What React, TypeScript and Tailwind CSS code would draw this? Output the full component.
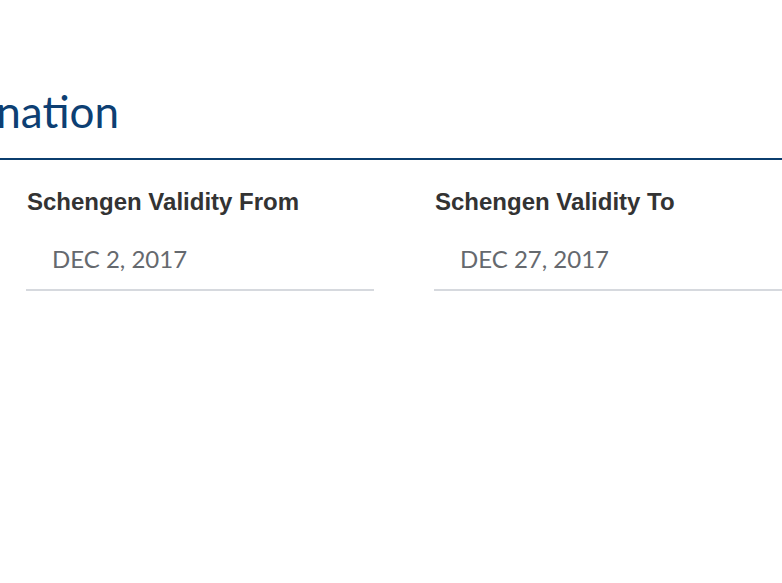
import React from "react";

function Field({ label, value }: { label: string; value: string }) {
  return (
    <div className="w-[348px] shrink-0">
      <div className="pl-[1px] text-[24px] leading-[28px] font-bold text-[#333333] font-['Liberation_Sans',Arial,sans-serif]">
        {label}
      </div>
      <div className="mt-[27px] pl-[26px] pb-[14px] border-b-2 border-[#d6d9de] text-[24px] leading-[32px] text-[#65696e] font-['Lato',sans-serif]">
        {value}
      </div>
    </div>
  );
}

export default function App() {
  return (
    <div className="w-[782px] h-[583px] overflow-hidden bg-white">
      <div className="pt-[86px] pb-[22px] border-b-2 border-[#0b3d6e]">
        <div className="w-[119px] flex justify-end">
          <h2 className="shrink-0 whitespace-nowrap text-[44px] leading-[50px] font-normal text-[#0d3f73] font-['Lato',sans-serif]">
            Destination
          </h2>
        </div>
      </div>
      <div className="flex gap-[60px] pl-[26px] pt-[28px]">
        <Field label="Schengen Validity From" value="DEC 2, 2017" />
        <Field label="Schengen Validity To" value="DEC 27, 2017" />
      </div>
    </div>
  );
}
